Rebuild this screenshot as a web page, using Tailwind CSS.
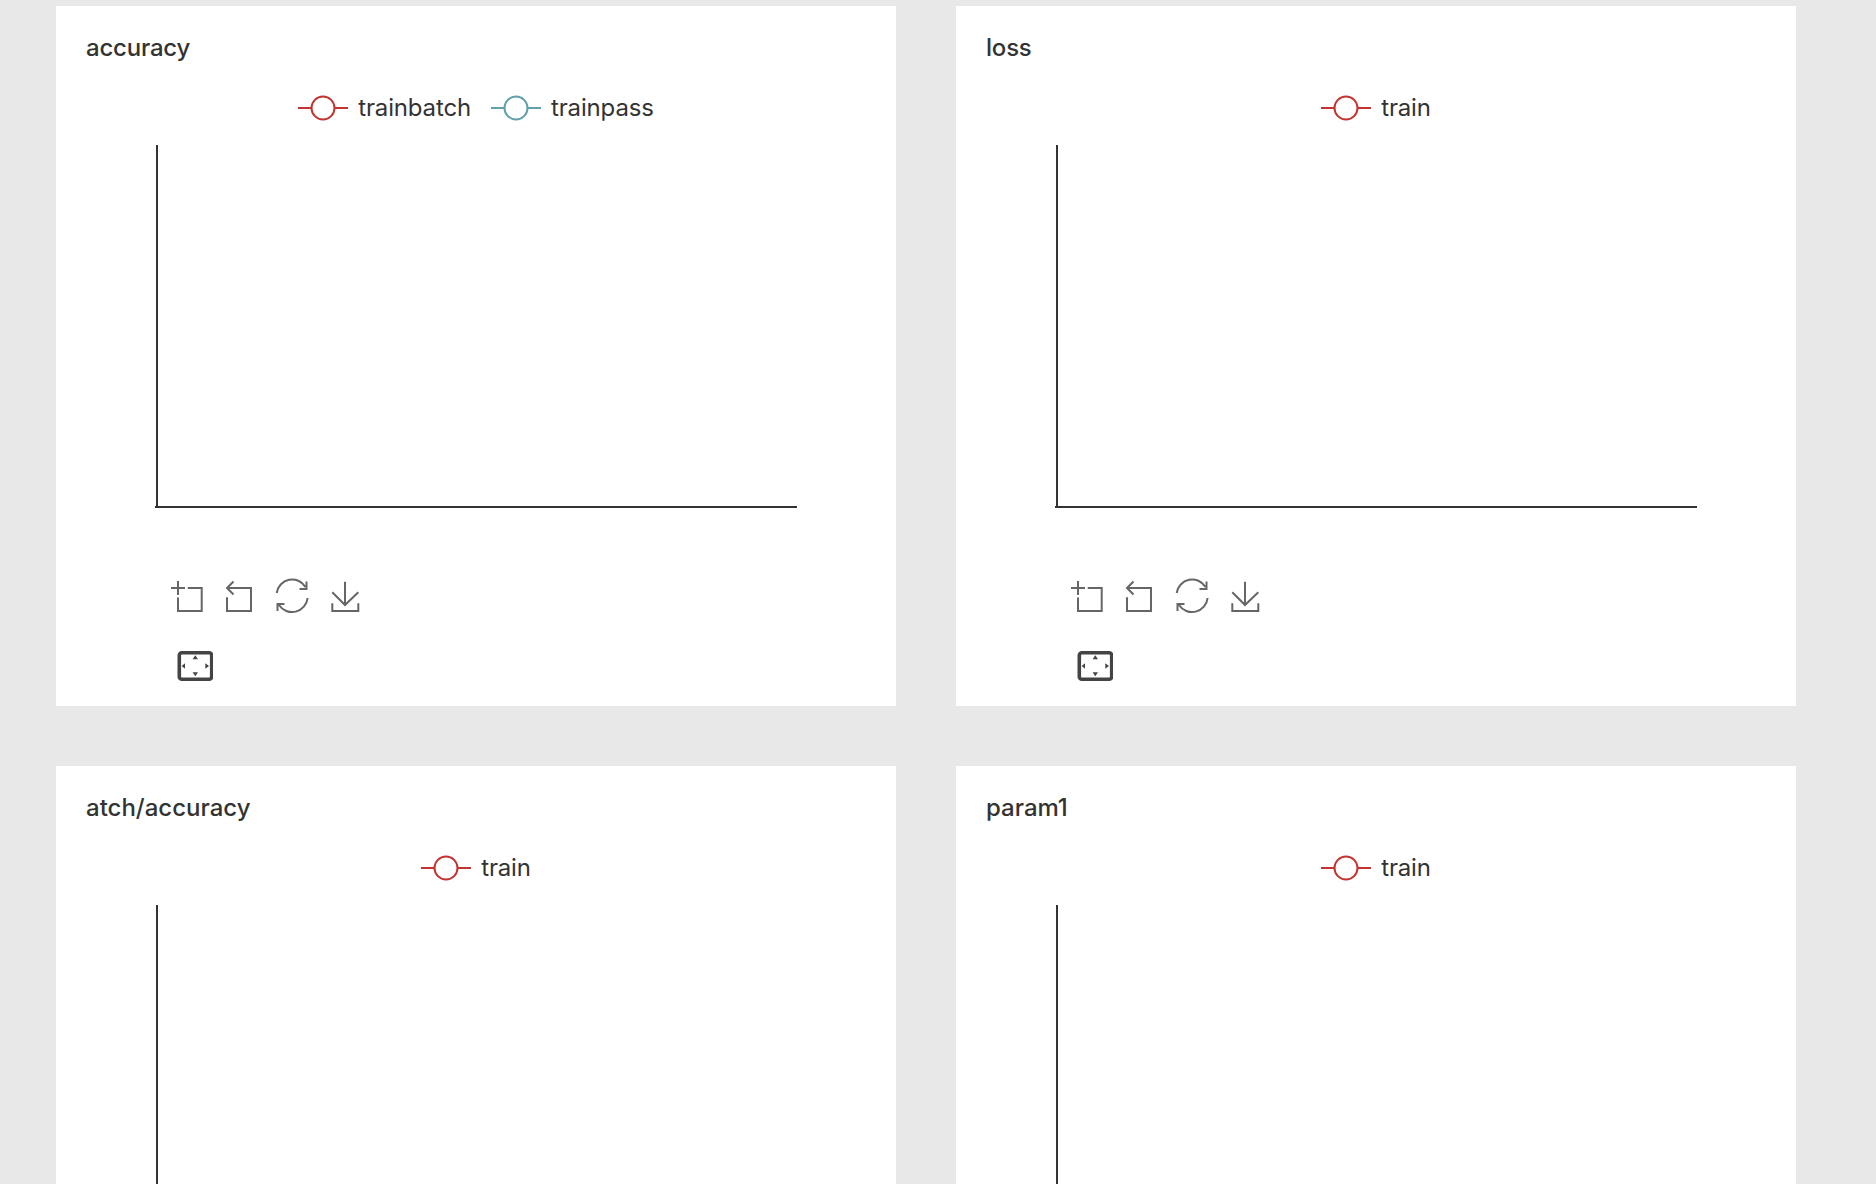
<!doctype html>
<html lang="en">
<head>
<meta charset="utf-8">
<title>Charts</title>
<script src="https://cdn.jsdelivr.net/npm/@tailwindcss/browser@4"></script>
</head>
<body class="m-0 h-[1184px] overflow-hidden bg-[#e8e8e8] font-['Inter','Liberation_Sans',sans-serif] text-[#333]">
<main class="grid grid-cols-[840px_840px] gap-[60px] pl-[56px] pt-[6px]">

<section class="h-[700px] bg-white pt-[28px]">
  <h2 class="pl-[30px] text-[24px] leading-[28px] font-medium tracking-[-0.2px]">accuracy</h2>
  <div class="mt-[34px] flex h-6 items-center justify-center gap-5 text-[24px] leading-6 font-normal tracking-[-0.15px]">
    <div class="flex items-center gap-[10px]"><svg width="50" height="26" viewBox="0 0 50 26" fill="none" stroke="#c23531" stroke-width="2"><path d="M0 13H13M37 13H50"/><circle cx="25" cy="13" r="11.5"/></svg><span>trainbatch</span></div>
    <div class="flex items-center gap-[10px]"><svg width="50" height="26" viewBox="0 0 50 26" fill="none" stroke="#61a0a8" stroke-width="2"><path d="M0 13H13M37 13H50"/><circle cx="25" cy="13" r="11.5"/></svg><span>trainpass</span></div>
  </div>
  <div class="mt-[25px] ml-[99px] w-[642px] border-b-2 border-[#333] pl-px"><div class="h-[361px] border-l-2 border-[#333]"></div></div>
  <div class="mt-[70px] ml-[104px] flex">
    <svg width="53" height="44" viewBox="0 0 53 44" fill="none" stroke="#666" stroke-width="2"><path d="M11 10H25M18 3V17M27.7 10H41.7V33H18V19.5"/></svg>
    <svg width="53" height="44" viewBox="0 0 53 44" fill="none" stroke="#666" stroke-width="2"><path d="M14 10H38V33H14V19.3M20.5 3.5L14 10L20.5 16.5"/></svg>
    <svg width="53" height="44" viewBox="0 0 53 44" fill="none" stroke="#666" stroke-width="2"><path d="M10.7 15A15.6 15.6 0 0 1 39.5 9M40.5 3.5V11H33.5M41.6 20A15.6 15.6 0 0 1 13 27M11.5 33V26H18.5"/></svg>
    <svg width="53" height="44" viewBox="0 0 53 44" fill="none" stroke="#666" stroke-width="2"><path d="M26 3.7V27M13.3 14.3L26 27L39.3 14.3M13.3 25.3V33H39.3V25.3"/></svg>
  </div>
  <div class="mt-[22px] ml-[104px]">
    <svg width="53" height="44" viewBox="0 0 53 44"><rect x="19.3" y="8.8" width="32.4" height="26.4" rx="2.5" fill="none" stroke="#444" stroke-width="3.6"/><path fill="#444" d="M35.3 11.3L38 15.3H32.6ZM35.3 32.3L38 28.3H32.6ZM21.7 22L25 19.3V24.7ZM49 22L45.3 19.3V24.7Z"/></svg>
  </div>
</section>

<section class="h-[700px] bg-white pt-[28px]">
  <h2 class="pl-[30px] text-[24px] leading-[28px] font-medium tracking-[-0.2px]">loss</h2>
  <div class="mt-[34px] flex h-6 items-center justify-center gap-5 text-[24px] leading-6 font-normal tracking-[-0.15px]">
    <div class="flex items-center gap-[10px]"><svg width="50" height="26" viewBox="0 0 50 26" fill="none" stroke="#c23531" stroke-width="2"><path d="M0 13H13M37 13H50"/><circle cx="25" cy="13" r="11.5"/></svg><span>train</span></div>
  </div>
  <div class="mt-[25px] ml-[99px] w-[642px] border-b-2 border-[#333] pl-px"><div class="h-[361px] border-l-2 border-[#333]"></div></div>
  <div class="mt-[70px] ml-[104px] flex">
    <svg width="53" height="44" viewBox="0 0 53 44" fill="none" stroke="#666" stroke-width="2"><path d="M11 10H25M18 3V17M27.7 10H41.7V33H18V19.5"/></svg>
    <svg width="53" height="44" viewBox="0 0 53 44" fill="none" stroke="#666" stroke-width="2"><path d="M14 10H38V33H14V19.3M20.5 3.5L14 10L20.5 16.5"/></svg>
    <svg width="53" height="44" viewBox="0 0 53 44" fill="none" stroke="#666" stroke-width="2"><path d="M10.7 15A15.6 15.6 0 0 1 39.5 9M40.5 3.5V11H33.5M41.6 20A15.6 15.6 0 0 1 13 27M11.5 33V26H18.5"/></svg>
    <svg width="53" height="44" viewBox="0 0 53 44" fill="none" stroke="#666" stroke-width="2"><path d="M26 3.7V27M13.3 14.3L26 27L39.3 14.3M13.3 25.3V33H39.3V25.3"/></svg>
  </div>
  <div class="mt-[22px] ml-[104px]">
    <svg width="53" height="44" viewBox="0 0 53 44"><rect x="19.3" y="8.8" width="32.4" height="26.4" rx="2.5" fill="none" stroke="#444" stroke-width="3.6"/><path fill="#444" d="M35.3 11.3L38 15.3H32.6ZM35.3 32.3L38 28.3H32.6ZM21.7 22L25 19.3V24.7ZM49 22L45.3 19.3V24.7Z"/></svg>
  </div>
</section>

<section class="h-[700px] bg-white pt-[28px]">
  <h2 class="pl-[30px] text-[24px] leading-[28px] font-medium">atch/accuracy</h2>
  <div class="mt-[34px] flex h-6 items-center justify-center gap-5 text-[24px] leading-6 font-normal tracking-[-0.15px]">
    <div class="flex items-center gap-[10px]"><svg width="50" height="26" viewBox="0 0 50 26" fill="none" stroke="#c23531" stroke-width="2"><path d="M0 13H13M37 13H50"/><circle cx="25" cy="13" r="11.5"/></svg><span>train</span></div>
  </div>
  <div class="mt-[25px] ml-[99px] w-[642px] border-b-2 border-[#333] pl-px"><div class="h-[361px] border-l-2 border-[#333]"></div></div>
</section>

<section class="h-[700px] bg-white pt-[28px]">
  <h2 class="pl-[30px] text-[24px] leading-[28px] font-medium">param1</h2>
  <div class="mt-[34px] flex h-6 items-center justify-center gap-5 text-[24px] leading-6 font-normal tracking-[-0.15px]">
    <div class="flex items-center gap-[10px]"><svg width="50" height="26" viewBox="0 0 50 26" fill="none" stroke="#c23531" stroke-width="2"><path d="M0 13H13M37 13H50"/><circle cx="25" cy="13" r="11.5"/></svg><span>train</span></div>
  </div>
  <div class="mt-[25px] ml-[99px] w-[642px] border-b-2 border-[#333] pl-px"><div class="h-[361px] border-l-2 border-[#333]"></div></div>
</section>

</main>
</body>
</html>
